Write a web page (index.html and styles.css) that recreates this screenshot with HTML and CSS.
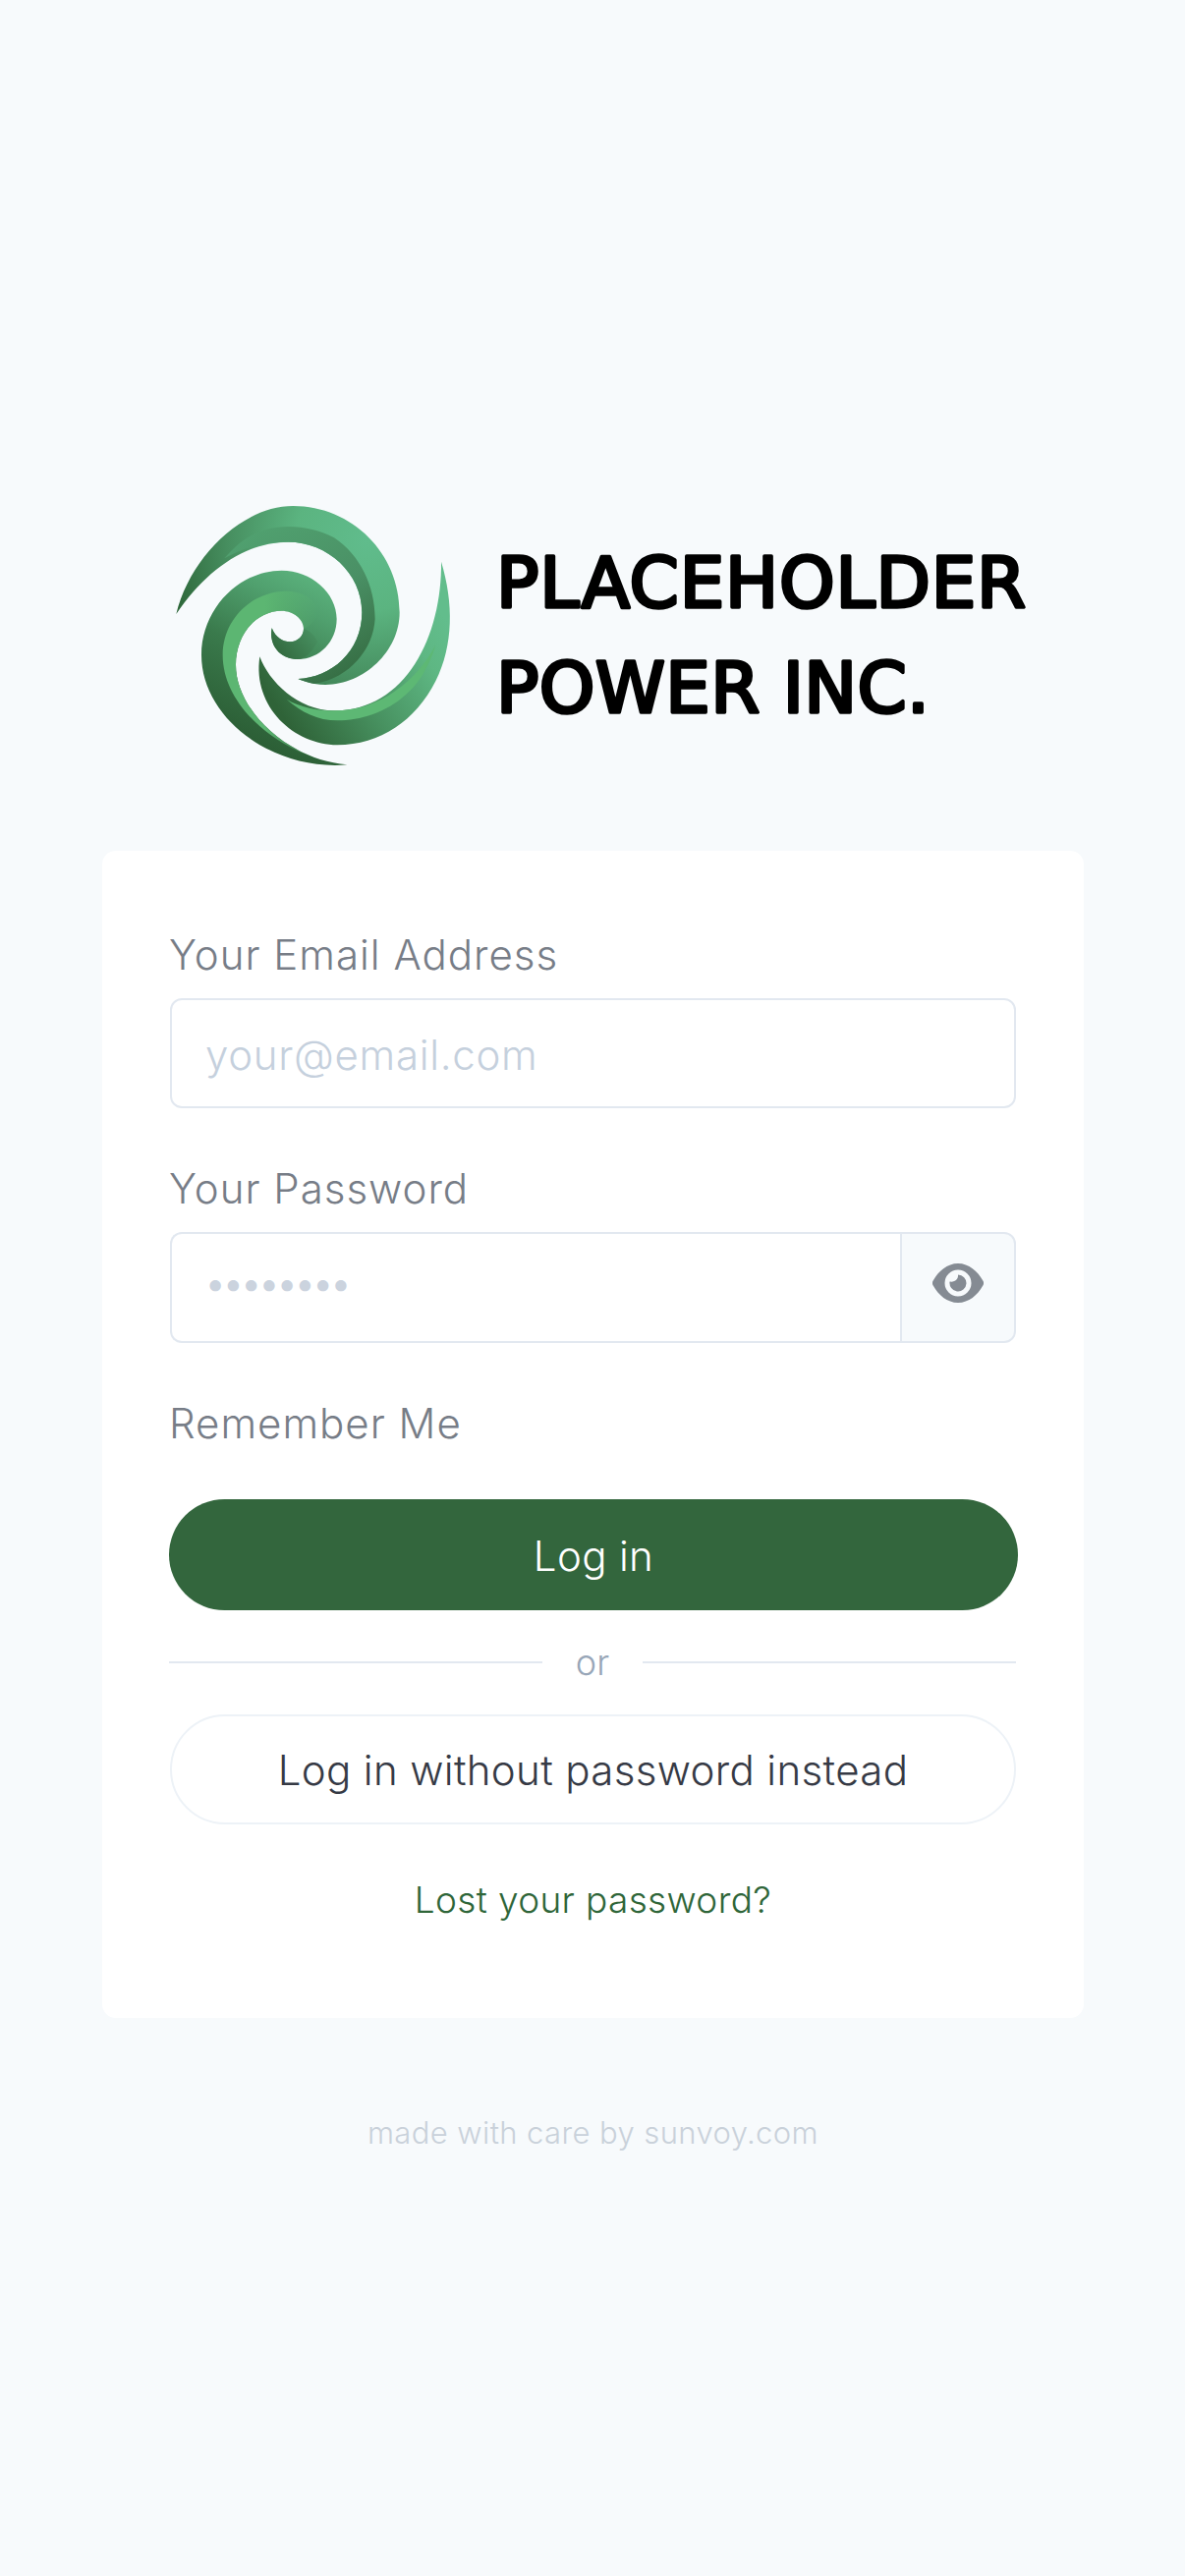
FILE: index.html
```html
<!DOCTYPE html>
<html lang="en">
<head>
<meta charset="utf-8">
<title>Log in</title>
<link rel="stylesheet" href="styles.css">
</head>
<body>
<main class="page">
  <header class="logo">
    <svg class="swirl" viewBox="0 0 960 930" aria-hidden="true">
      <defs>
        <radialGradient id="g1" gradientUnits="userSpaceOnUse" cx="640" cy="180" r="620">
          <stop offset="0" stop-color="#60bc8c"/><stop offset=".35" stop-color="#5bb480"/><stop offset=".68" stop-color="#478f60"/><stop offset="1" stop-color="#2c6538"/>
        </radialGradient>
        <linearGradient id="g1b" gradientUnits="userSpaceOnUse" x1="300" y1="150" x2="560" y2="620">
          <stop offset="0" stop-color="#50a06f"/><stop offset=".5" stop-color="#4a9065"/><stop offset="1" stop-color="#356c42"/>
        </linearGradient>
        <linearGradient id="g2" gradientUnits="userSpaceOnUse" x1="240" y1="760" x2="480" y2="290">
          <stop offset="0" stop-color="#2c5f36"/><stop offset=".45" stop-color="#3a7a4c"/><stop offset=".8" stop-color="#50a06e"/><stop offset="1" stop-color="#5bb27d"/>
        </linearGradient>
        <linearGradient id="g2c" gradientUnits="userSpaceOnUse" x1="340" y1="530" x2="500" y2="410">
          <stop offset="0" stop-color="#2f6238"/><stop offset="1" stop-color="#4f9e6d"/>
        </linearGradient>
        <linearGradient id="band2" gradientUnits="userSpaceOnUse" x1="330" y1="0" x2="490" y2="0">
          <stop offset="0" stop-color="#5cb672"/><stop offset="1" stop-color="#5cb672" stop-opacity="0"/>
        </linearGradient>
        <linearGradient id="g3" gradientUnits="userSpaceOnUse" x1="400" y1="740" x2="880" y2="420">
          <stop offset="0" stop-color="#2f6338"/><stop offset=".4" stop-color="#47905f"/><stop offset=".8" stop-color="#5eb783"/><stop offset="1" stop-color="#62bd8c"/>
        </linearGradient>
      </defs>
      <path fill="url(#g1)" d="M58 405C100 230 260 75 415 75C595 75 740 220 740 400C740 530 610 640 480 618C460 614 445 610 430 603C530 600 625 520 625 400C625 280 520 185 400 185C270 185 150 270 58 405Z"/>
      <path fill="url(#g1b)" d="M205 235C260 170 320 138 400 138C450 138 500 150 540 172C620 225 665 320 665 420C660 510 590 600 480 618C460 614 445 610 430 603C530 600 625 520 625 400C625 280 520 185 400 185C320 185 260 205 205 235Z"/>
      <path fill="url(#g2)" d="M580 865C350 885 135 720 135 530C135 390 250 272 380 272C470 272 548 340 548 420C548 490 495 543 430 543C375 543 340 500 350 448C362 478 385 490 405 490C430 490 447 470 447 450C447 420 415 395 380 395C300 395 240 470 240 560C240 700 400 850 580 865Z"/>
      <path fill="url(#g2c)" d="M350 448C362 478 385 490 405 490C430 490 447 470 447 450C465 455 480 470 490 490C470 525 450 543 430 543C375 543 340 500 350 448Z"/>
      <path fill="url(#band2)" d="M580 865C400 850 200 700 200 530C200 420 290 335 395 335C430 335 465 350 485 375C495 400 490 430 447 450C447 420 415 395 380 395C300 395 240 470 240 560C240 700 400 850 580 865Z"/>
      <path fill="url(#g3)" d="M867 245C905 370 905 500 850 610C790 730 680 805 550 805C420 805 290 690 313 535C340 610 430 700 540 700C760 700 870 470 867 245Z"/>
      <path fill="#5db874" d="M850 500C825 580 790 625 760 650C700 705 620 730 550 730C490 730 440 705 395 665C435 690 490 700 540 700C680 700 790 610 850 500Z"/>
    </svg>
    <svg class="wordmark" viewBox="0 0 560 240" role="img" aria-label="PLACEHOLDER POWER INC.">
      <text class="wordmark-text" x="2" y="98" textLength="539">PLACEHOLDER</text>
      <text class="wordmark-text" x="2" y="205" textLength="441">POWER INC.</text>
    </svg>
  </header>

  <form class="card">
    <div class="field">
      <label class="label" for="email">Your Email Address</label>
      <input class="input" id="email" type="email" placeholder="your@email.com">
    </div>
    <div class="field">
      <label class="label" for="password">Your Password</label>
      <div class="password-group">
        <input class="input input-joined input-dots" id="password" type="text" placeholder="••••••••">
        <button class="eye" type="button" aria-label="Show password">
          <svg class="eye-icon" viewBox="0 0 52 40" aria-hidden="true">
            <path fill="#858b93" fill-rule="evenodd" d="M26 0C37 0 46 8 51 17C52.500 19 52.500 21 51 23C46 32 37 40 26 40C15 40 6 32 1 23C-.5 21 -.5 19 1 17C6 8 15 0 26 0ZM26 6.500A13.500 13.500 0 1 0 26 33.500A13.500 13.500 0 1 0 26 6.500ZM26 11.500C26.500 15.500 23 19.500 17.600 18.500A8.500 8.500 0 1 0 26 11.500Z"/>
          </svg>
        </button>
      </div>
    </div>
    <div class="remember">Remember Me</div>
    <button class="btn btn-primary" type="button">Log in</button>
    <div class="divider"><span class="divider-line"></span><span class="divider-text">or</span><span class="divider-line"></span></div>
    <button class="btn btn-secondary" type="button">Log in without password instead</button>
    <a class="lost" href="#">Lost your password?</a>
  </form>

  <footer class="footer">made with care by sunvoy.com</footer>
</main>
</body>
</html>
```

FILE: styles.css
```css
* { box-sizing: border-box; }
html, body { margin: 0; padding: 0; }
body {
  background: #f7fafc;
  font-family: Inter, "Liberation Sans", sans-serif;
  color: #2d3748;
  min-height: 2622px;
}
.page {
  padding: 490px 103px 0 104px;
  display: flex;
  flex-direction: column;
}
.logo {
  display: flex;
  align-items: flex-start;
  height: 376px;
  padding-left: 56px;
}
.swirl { width: 320px; height: 310px; display: block; flex: none; }
.wordmark { width: 560px; height: 240px; display: block; flex: none; margin: 30px 0 0 23px; overflow: visible; }
.wordmark-text {
  font-family: "DejaVu Sans", sans-serif;
  font-size: 72px;
  font-weight: 400;
  fill: #000;
  stroke: #000;
  stroke-width: 3.6px;
  stroke-linejoin: round;
  stroke-linecap: round;
}
.card {
  background: #fff;
  border-radius: 14px;
  padding: 74px 69px 89px;
  height: 1188px;
  display: flex;
  flex-direction: column;
}
.field { margin-bottom: 50px; }
.label {
  display: block;
  font-size: 42px;
  font-weight: 350;
  letter-spacing: 1px;
  line-height: 63px;
  color: #777d87;
  margin-bottom: 13px;
  margin-left: -1px;
}
.input {
  display: block;
  width: 100%;
  height: 112px;
  border: 2.5px solid #e2e8f0;
  border-radius: 12px;
  background: #fff;
  padding: 2px 34px 0;
  font-family: inherit;
  font-size: 42px;
  font-weight: 300;
  letter-spacing: .7px;
  color: #2d3748;
  outline: none;
}
.input::placeholder { color: #c5d0dd; opacity: 1; }
.password-group { display: flex; height: 113px; }
.input-joined {
  flex: 1;
  min-width: 0;
  height: 113px;
  border-radius: 12px 0 0 12px;
  border-right: 0;
}
.input-dots { padding: 0 34px 14px; font-weight: 400; }
.input-dots::placeholder { font-size: 36px; letter-spacing: -2px; color: #cbd3de; }
.eye {
  width: 118px;
  flex: none;
  height: 113px;
  border: 2.5px solid #e2e8f0;
  border-radius: 0 12px 12px 0;
  background: #f7fafc;
  padding: 0 0 10px;
  display: flex;
  align-items: center;
  justify-content: center;
}
.eye-icon { width: 52px; height: 40px; display: block; }
.remember {
  font-size: 42px;
  font-weight: 350;
  letter-spacing: 1px;
  line-height: 63px;
  color: #777d87;
  margin-bottom: 46px;
  margin-left: -1px;
}
.btn {
  display: block;
  width: 100%;
  font-family: inherit;
  font-size: 42px;
  font-weight: 350;
  letter-spacing: .35px;
  text-align: center;
  border-radius: 57px;
  padding: 0;
}
.btn-primary {
  width: calc(100% + 3px);
  margin-left: -1px;
  height: 113px;
  padding-top: 2px;
  border: 0;
  background: #33663d;
  color: #fff;
}
.divider {
  display: flex;
  align-items: center;
  height: 64px;
  margin: 21px 0 21px -1px;
}
.divider-line { flex: 1; height: 2.5px; background: #e2e8f0; }
.divider-text { font-size: 36px; font-weight: 300; color: #98a6b8; padding: 0 34px; }
.btn-secondary {
  height: 112px;
  border: 2.5px solid #edf2f7;
  background: #fff;
  color: #363a45;
}
.lost {
  display: block;
  margin-top: 45px;
  text-align: center;
  font-size: 37px;
  font-weight: 350;
  letter-spacing: .35px;
  line-height: 63px;
  color: #2f6639;
  text-decoration: none;
}
.footer {
  margin-top: 92px;
  text-align: center;
  font-size: 31px;
  font-weight: 300;
  letter-spacing: .4px;
  line-height: 50px;
  color: #c9d1da;
}
```
